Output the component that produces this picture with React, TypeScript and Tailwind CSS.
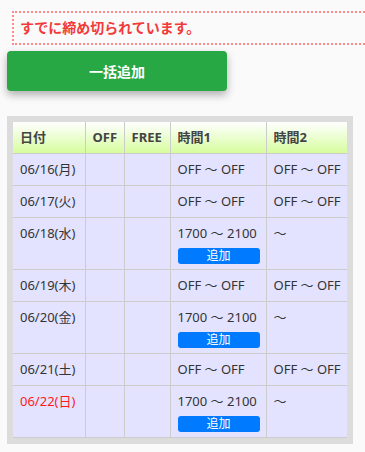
import React from 'react';

type Row = { date: string; red?: boolean; t1: string; t2: string; add?: boolean };

const rows: Row[] = [
  { date: '06/16(月)', t1: 'OFF ～ OFF', t2: 'OFF ～ OFF' },
  { date: '06/17(火)', t1: 'OFF ～ OFF', t2: 'OFF ～ OFF' },
  { date: '06/18(水)', t1: '1700 ～ 2100', t2: '～', add: true },
  { date: '06/19(木)', t1: 'OFF ～ OFF', t2: 'OFF ～ OFF' },
  { date: '06/20(金)', t1: '1700 ～ 2100', t2: '～', add: true },
  { date: '06/21(土)', t1: 'OFF ～ OFF', t2: 'OFF ～ OFF' },
  { date: '06/22(日)', red: true, t1: '1700 ～ 2100', t2: '～', add: true },
];

const font = { fontFamily: '"Noto Sans", "Noto Sans CJK JP", sans-serif' };

export default function App() {
  return (
    <div className="min-h-[452px] w-[365px] overflow-hidden bg-[#fafafa] text-[#333]" style={font}>
      <div className="pl-[12px] pt-[11px]">
        <div className="h-[34px] w-[400px] border-2 border-dotted border-[#ff8a8a] pl-[6px] text-[14px] font-semibold leading-[30px] text-[#f23a3a]">
          すでに締め切られています。
        </div>
      </div>
      <div className="px-[7px] pt-[6px]">
        <button className="h-[40px] w-[220px] rounded-[4px] bg-[#28a745] text-[14px] font-bold text-white shadow-[0_4px_8px_rgba(0,0,0,0.3)]">
          一括追加
        </button>
      </div>
      <div className="ml-[7px] mt-[25px] w-[346px] bg-[#dcdcdc] p-[6px]">
        <table className="w-[334px] table-fixed border-collapse text-[13px]">
          <colgroup>
            <col className="w-[72px]" />
            <col className="w-[39px]" />
            <col className="w-[46px]" />
            <col className="w-[96px]" />
            <col className="w-[81px]" />
          </colgroup>
          <thead>
            <tr className="h-[31px] bg-gradient-to-b from-white to-[#d6fc9c]">
              {['日付', 'OFF', 'FREE', '時間1', '時間2'].map((h) => (
                <th
                  key={h}
                  className="border-x border-b border-t-0 border-[#cccccc] px-[7px] text-left font-bold text-[#444] first:border-l-0 last:border-r-0 whitespace-nowrap"
                >
                  {h}
                </th>
              ))}
            </tr>
          </thead>
          <tbody className="bg-[#e3e3ff]">
            {rows.map((r) => (
              <tr key={r.date} className={r.add ? 'h-[52px]' : 'h-[32px]'}>
                <td className={`border border-l-0 border-[#cccccc] px-[7px] align-top pt-[7px] leading-[17px] whitespace-nowrap ${r.red ? 'text-[#ff1a1a]' : ''}`}>
                  {r.date}
                </td>
                <td className="border border-[#cccccc]" />
                <td className="border border-[#cccccc]" />
                <td className="border border-[#cccccc] px-[7px] pt-[7px] align-top leading-[17px] whitespace-nowrap">
                  <div>{r.t1}</div>
                  {r.add && (
                    <button className="mt-[6px] mb-[5px] block h-[16px] w-[82px] rounded-[3px] bg-[#007bff] text-[12px] leading-[16px] text-white">
                      追加
                    </button>
                  )}
                </td>
                <td className="border border-r-0 border-[#cccccc] px-[7px] pt-[7px] align-top leading-[17px] whitespace-nowrap">
                  {r.t2}
                </td>
              </tr>
            ))}
          </tbody>
        </table>
      </div>
    </div>
  );
}
